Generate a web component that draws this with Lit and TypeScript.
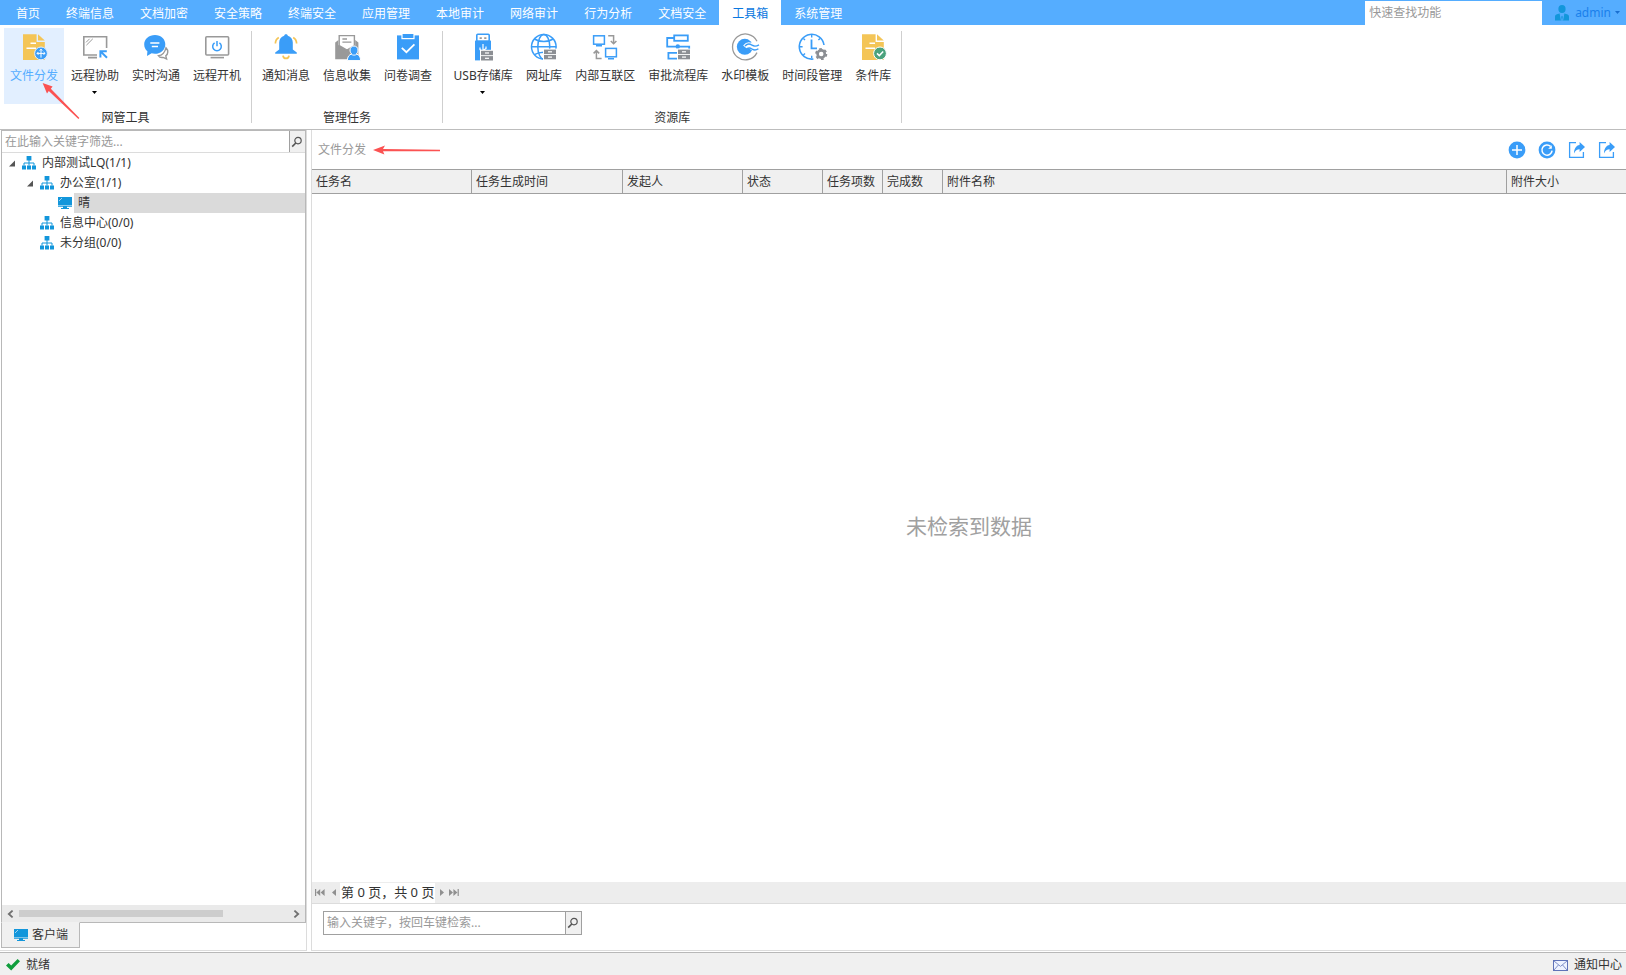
import { LitElement, html, svg, css, nothing, TemplateResult } from "lit";
import { customElement, property, state } from "lit/decorators.js";
import { classMap } from "lit/directives/class-map.js";

const BLUE = "#3a9df8";
const GRAY = "#999999";
const GOLD = "#f4c557";

const doc = svg`
  <path fill=${GOLD} d="M3 1.3H16.6V9H24.8V27H3Z"/>
  <path fill=${GOLD} d="M18 1.3L24.8 7.6H18Z"/>
  <path stroke="#fff" stroke-width="1.5" d="M10.5 10.2H16M6.5 15.3H16"/>`;

const cabinet = (x: number, y: number) => svg`
  <rect x=${x - 1} y=${y - 1} width="14" height="12" fill="#fff"/>
  <rect x=${x} y=${y} width="12" height="4.4" fill="#8c8f94"/>
  <rect x=${x} y=${y + 5.3} width="12" height="4.4" fill="#8c8f94"/>
  <rect x=${x + 4} y=${y + 1.6} width="4" height="1.2" fill="#fff"/>
  <rect x=${x + 4} y=${y + 6.9} width="4" height="1.2" fill="#fff"/>`;

const toolIcons: Record<string, TemplateResult<2>> = {
  distribute: svg`${doc}
    <circle cx="21" cy="20.4" r="6.4" fill=${BLUE} stroke="#e2efff"/>
    <path fill="none" stroke="#fff" stroke-width="1" d="M21 16.2V24.6M17 20.4H25M19.7 17.6L21 16.2L22.3 17.6M23.6 19L25 20.4L23.6 21.8M18.4 19L17 20.4L18.4 21.8"/>`,
  assist: svg`
    <path fill="none" stroke=${GRAY} stroke-width="1.6" d="M16 22H2.8V3.8H25.6V15"/>
    <path stroke=${GRAY} stroke-width="1.8" d="M7 24.6H16"/>
    <path stroke=${GRAY} stroke-width="1" d="M5 9.4L8.6 5.8M5.4 12.2L11.8 5.8"/>
    <path fill="none" stroke=${BLUE} stroke-width="2" d="M19.4 24.4V18.2H25.8M19.8 18.6L26 24.8"/>`,
  chat: svg`
    <path fill="none" stroke=${GRAY} stroke-width="1.4" d="M24 14.8C26.6 17.4 26.2 21 23.8 22.8L24.6 26L21.2 24.4C19 24.8 17.2 24 16.4 22.6C19.6 22.4 22.6 20.4 24 14.8Z"/>
    <path fill=${BLUE} d="M13 1.9C19 1.9 23.3 6 23.3 11.2C23.3 16.6 19 20.8 13 20.8C11.6 20.8 10.6 20.6 9.6 20.3L5 23L5.4 18.3C3.4 16.6 2.2 14.2 2.2 11.2C2.2 6 7 1.9 13 1.9Z"/>
    <path stroke="#fff" stroke-width="1.5" d="M8.3 10.1H17.4M9.8 13.5H16"/>`,
  power: svg`
    <rect x="2.8" y="3.8" width="22.8" height="18.2" rx="1" fill="none" stroke=${GRAY} stroke-width="1.6"/>
    <path stroke=${GRAY} stroke-width="1.6" d="M7.6 24.6H21"/>
    <path fill="none" stroke=${BLUE} stroke-width="1.5" d="M11.6 9.8A4.3 4.3 0 1 0 16.4 9.8M14 8V13.2"/>`,
  bell: svg`
    <path fill=${BLUE} d="M14 1.2C15.1 1.2 15.8 1.9 15.8 2.8C18.9 3.6 20.8 6.2 20.8 9.6V16.4L24.8 19.4V20.8H3.2V19.4L7.2 16.4V9.6C7.2 6.2 9.1 3.6 12.2 2.8C12.2 1.9 12.9 1.2 14 1.2Z"/>
    <path fill="none" stroke=${GOLD} stroke-width="1.7" d="M3.4 10.6C3.4 7.6 4.6 5.6 6.8 4.4M24.6 10.6C24.6 7.6 23.4 5.6 21.2 4.4M11 22.6C11.4 26.4 16.6 26.4 17 22.6"/>`,
  collect: svg`
    <path fill=${GRAY} d="M2.2 9.4L5.4 7V12L14 17L22.2 12V7L25.4 9.4V26.2H2.2Z"/>
    <path fill="#fff" stroke=${GRAY} stroke-width="1.4" d="M6.2 12.6V2.6H21.4V12.6L14 17Z"/>
    <path stroke=${GRAY} stroke-width="1.3" d="M9.4 6H14M9.4 9.2H18.4"/>
    <path fill=${BLUE} stroke="#fff" stroke-width="1" d="M21 13C23.3 13 25 14.7 25 17C25 18.8 24.2 20.2 23.2 21C26 21.6 27.6 23.8 27.6 27.6H14.4C14.4 23.8 16 21.6 18.8 21C17.8 20.2 17 18.8 17 17C17 14.7 18.7 13 21 13Z"/>
    <path fill="none" stroke="#fff" stroke-width=".9" d="M18.4 21.4C20 22.4 22 22.4 23.6 21.4"/>`,
  survey: svg`
    <rect x="3" y="2.4" width="22" height="24" fill=${BLUE}/>
    <rect x="8" y=".4" width="12" height="5.2" fill=${BLUE} stroke="#fff" stroke-width="1.2"/>
    <path fill="none" stroke="#fff" stroke-width="1.8" d="M7.8 14.8L12.4 19.2L20.4 11.4"/>`,
  usb: svg`
    <rect x="7.8" y="1.3" width="12.4" height="7" rx="1" fill="#fff" stroke=${BLUE} stroke-width="1.6"/>
    <path stroke=${GRAY} stroke-width="1.6" d="M10.6 5.1H12.8M15.2 5.1H17.4"/>
    <rect x="6" y="7.6" width="16" height="19.8" fill=${BLUE}/>
    <path fill="none" stroke="#fff" stroke-width="1.2" d="M14 11V20M11 14.6V16.6L14 18.4M17 13.6V15.6L14 17.4"/>
    ${cabinet(12, 17.8)}`,
  globe: svg`
    <g fill="none" stroke=${BLUE} stroke-width="1.5">
      <circle cx="13.8" cy="13.8" r="12.3"/>
      <ellipse cx="13.8" cy="13.8" rx="6" ry="12.3"/>
      <path d="M1.5 13.8H26.1M4.4 6C9.6 9.4 18 9.4 23.2 6M4.4 21.6C9.6 18.4 18 18.4 23.2 21.6"/>
    </g>
    ${cabinet(14, 16.6)}`,
  interconnect: svg`
    <g fill="none" stroke=${BLUE} stroke-width="1.5">
      <rect x="2.6" y="2.8" width="10.8" height="8.4"/>
      <rect x="14.6" y="15.4" width="10.8" height="8.4"/>
      <path d="M5 12.8H11M17 25.8H23"/>
    </g>
    <path fill="none" stroke=${GRAY} stroke-width="1.5" d="M17.2 2.8H22.6V10.4M19.8 8L22.6 10.8L25.4 8M10.6 25.6H5.4V18M2.6 20.4L5.4 17.6L8.2 20.4"/>`,
  flow: svg`
    <g fill="none" stroke=${BLUE} stroke-width="1.8">
      <rect x="10.2" y="2.4" width="13.6" height="5.4"/>
      <path d="M10 5H3.2V13.6H25.2V17M13 25.6H4.4V19.8H13"/>
    </g>
    <circle cx="13.8" cy="13.5" r="2.2" fill=${BLUE}/>
    ${cabinet(14, 16.6)}`,
  watermark: svg`
    <path fill="none" stroke=${GRAY} stroke-width="1.3" d="M26 8.2A12.9 12.9 0 1 0 26 19.6"/>
    <circle cx="13.8" cy="13.8" r="8" fill=${BLUE}/>
    <path fill="none" stroke="#fff" stroke-width="6" d="M14.4 14.4C17 11.4 19 12.2 21 13.8C23.4 15.6 25.4 15 28 13.4"/>
    <path fill="none" stroke=${BLUE} stroke-width="1.4" d="M14 13C16.8 10 19 10.8 21 12.2C23.4 13.8 25.4 13.4 28 11.8M14.6 17C17.2 14 19.2 14.8 21.2 16.2C23.4 17.6 25.2 17.4 27.4 15.8"/>`,
  period: svg`
    <path fill="none" stroke=${BLUE} stroke-width="1.6" d="M26 12A12.4 12.4 0 1 0 15.4 26"/>
    <path fill="none" stroke=${BLUE} stroke-width="1.4" d="M13.7 2V4.4M2 13.7H4.6M5.4 5.4L7 7M22 5.4L20.4 7M5.4 22L7 20.4M13.7 25V22.8"/>
    <path fill="none" stroke=${BLUE} stroke-width="1.8" d="M13.5 6.4V15.4H19"/>
    <circle cx="23.2" cy="21" r="3.6" fill="none" stroke="#8c8f94" stroke-width="2.6"/>
    <circle cx="23.2" cy="21" r="5.2" fill="none" stroke="#8c8f94" stroke-width="1.8" stroke-dasharray="2.7 2.74"/>`,
  condition: svg`${doc}
    <circle cx="21" cy="20.4" r="6.4" fill="#4aa27c" stroke="#fff"/>
    <path fill="none" stroke="#fff" stroke-width="1.5" d="M18 20.4L20.3 22.6L24.2 18.6"/>`,
};

const orgIcon = html`<svg class="ico" width="14" height="14" viewBox="0 0 14 14" aria-hidden="true">
  <path fill="#1296db" d="M4.6 0H9.4V4.6H4.6ZM0 9.4H4V13.6H0ZM5 9.4H9V13.6H5ZM10 9.4H14V13.6H10Z"/>
  <path fill="none" stroke="#1296db" stroke-width="1" d="M7 4V9.6M2 9.6V7H12V9.6"/></svg>`;
const pcIcon = html`<svg class="ico" width="14" height="14" viewBox="0 0 14 14" aria-hidden="true">
  <path fill="#1296db" d="M0 1H14V9H0ZM0 9.6H14V10.8H0ZM5 10.8H9V12H11V13H3V12H5Z"/>
  <path stroke="#9fd4f2" stroke-width="1" d="M1 5L4 2"/></svg>`;
const lens = html`<svg width="12" height="12" viewBox="0 0 12 12" aria-hidden="true">
  <circle cx="7" cy="4.6" r="3.2" fill="none" stroke="#555" stroke-width="1.2"/>
  <path stroke="#555" stroke-width="1.6" d="M4.8 7L1.2 10.6"/></svg>`;

interface Tool { icon: string; label: string; menu?: boolean }
interface Group { title: string; tools: Tool[] }
interface Node { label: string; leaf?: boolean; children?: Node[] }

const TABS = ["首页", "终端信息", "文档加密", "安全策略", "终端安全", "应用管理", "本地审计", "网络审计", "行为分析", "文档安全", "工具箱", "系统管理"];

const GROUPS: Group[] = [
  { title: "网管工具", tools: [
    { icon: "distribute", label: "文件分发" },
    { icon: "assist", label: "远程协助", menu: true },
    { icon: "chat", label: "实时沟通" },
    { icon: "power", label: "远程开机" },
  ] },
  { title: "管理任务", tools: [
    { icon: "bell", label: "通知消息" },
    { icon: "collect", label: "信息收集" },
    { icon: "survey", label: "问卷调查" },
  ] },
  { title: "资源库", tools: [
    { icon: "usb", label: "USB存储库", menu: true },
    { icon: "globe", label: "网址库" },
    { icon: "interconnect", label: "内部互联区" },
    { icon: "flow", label: "审批流程库" },
    { icon: "watermark", label: "水印模板" },
    { icon: "period", label: "时间段管理" },
    { icon: "condition", label: "条件库" },
  ] },
];

const TREE: Node[] = [
  { label: "内部测试LQ(1/1)", children: [
    { label: "办公室(1/1)", children: [{ label: "晴", leaf: true }] },
    { label: "信息中心(0/0)" },
    { label: "未分组(0/0)" },
  ] },
];

const base = css`
  * { box-sizing: border-box; }
  button, input { font: inherit; color: inherit; margin: 0; padding: 0; border: 0; background: none; border-radius: 0; outline: none; }
  button { cursor: pointer; }
  svg { display: block; flex: none; }
  input::placeholder { color: #999; opacity: 1; }
`;

@customElement("top-tabs")
export class TopTabs extends LitElement {
  @state() private active = "工具箱";
  static styles = [base, css`
    :host { display: flex; height: 25px; background: #55adff; padding-left: 3px; }
    .tabs { display: flex; }
    .tab { padding: 3px 13px 0; color: #fff; white-space: nowrap; }
    .tab.on { background: #fff; color: #0a78e0; }
    .find { margin: 1px 13px 0 auto; width: 177px; background: #fff; padding: 0 4px 1px; }
    .user { display: flex; align-items: center; gap: 6px; padding-right: 6px; color: #1a80ec; }
    .user svg:last-child { margin-left: -2px; }
  `];
  render() {
    return html`
      <nav class="tabs">${TABS.map(t => html`
        <button class=${classMap({ tab: true, on: t === this.active })} @click=${() => (this.active = t)}>${t}</button>`)}
      </nav>
      <input class="find" type="text" aria-label="快速查找功能" placeholder="快速查找功能">
      <button class="user">
        <svg width="14" height="16" viewBox="0 0 14 16" aria-hidden="true">
          <ellipse cx="7" cy="4" rx="3.6" ry="4" fill="#1296db"/>
          <path fill="#1296db" d="M0 15.6V11.4C0 9.6 2 8.8 4.6 8.4L7 12L9.4 8.4C12 8.8 14 9.6 14 11.4V15.6Z"/>
          <path stroke="#55adff" d="M5.2 9L6.4 15.6M8.8 9L7.6 15.6"/>
        </svg>
        <span>admin</span>
        <svg width="5" height="3" viewBox="0 0 5 3" aria-hidden="true"><path fill="#1a6fd0" d="M0 0H5L2.5 3Z"/></svg>
      </button>`;
  }
}

@customElement("tool-ribbon")
export class ToolRibbon extends LitElement {
  @state() private active = "文件分发";
  static styles = [base, css`
    :host { display: flex; padding: 3px 0 2px; background: #fff; border-bottom: 1px solid #bdbdbd; }
    .group { position: relative; display: flex; flex-direction: column; padding: 0 4px; }
    .group::after { content: ""; position: absolute; right: -1px; top: 3px; bottom: 4px; width: 1px; background: #cfcfcf; }
    .group + .group { margin-left: 1px; }
    .tools { display: flex; gap: 1px; }
    .tool { display: flex; flex-direction: column; align-items: center; height: 76px; padding: 5px 6px 0; white-space: nowrap; line-height: 18px; }
    .tool.wide { min-width: 72px; }
    .tool svg { margin-bottom: 6px; overflow: visible; }
    .tool.on { background: #e2efff; color: #55adff; }
    .tool .caret { margin: 6px 0 0; }
    .title { text-align: center; line-height: 18px; margin-top: 5px; }
  `];
  render() {
    return GROUPS.map(g => html`
      <section class="group">
        <div class="tools">${g.tools.map(t => html`
          <button class=${classMap({ tool: true, wide: t.label.length > 4, on: t.label === this.active })} @click=${() => (this.active = t.label)}>
            <svg width="28" height="28" viewBox="0 0 28 28" aria-hidden="true">${toolIcons[t.icon]}</svg>
            <span>${t.label}</span>
            ${t.menu ? html`<svg class="caret" width="6" height="3" viewBox="0 0 6 3" aria-hidden="true"><path d="M0 0H5L2.5 3Z"/></svg>` : nothing}
          </button>`)}
        </div>
        <div class="title">${g.title}</div>
      </section>`);
  }
}

@customElement("search-field")
export class SearchField extends LitElement {
  @property() hint = "";
  static styles = [base, css`
    :host { display: flex; background: #fff; }
    input { flex: 1; min-width: 0; padding: 0 0 0 3px; }
    button { width: 16px; display: flex; align-items: center; justify-content: center; padding-right: 1px; background: #f0f0f0; border-left: 1px solid #a0a0a0; }
  `];
  render() {
    return html`<input type="text" aria-label=${this.hint} placeholder=${this.hint}><button aria-label="检索">${lens}</button>`;
  }
}

@customElement("client-panel")
export class ClientPanel extends LitElement {
  @state() private selected = "晴";
  static styles = [base, css`
    :host { display: flex; flex-direction: column; padding: 0 0 2px 1px; border: solid #dcdcdc; border-width: 0 1px 1px 0; background: #fff; }
    .box { flex: 1; display: flex; flex-direction: column; border: 1px solid #b8b8b8; }
    search-field { height: 22px; border-bottom: 1px solid #dcdcdc; }
    .tree { flex: 1; }
    ul { list-style: none; margin: 0; padding: 0; }
    ul ul { padding-left: 18px; }
    .row { display: flex; align-items: center; width: 100%; height: 20px; text-align: left; }
    .twist { width: 20px; padding-left: 7px; }
    .name { flex: 1; line-height: 20px; margin-left: 2px; padding-left: 4px; }
    .name.on { background: #dadada; }
    .scroll { display: flex; align-items: center; height: 17px; background: #eaeaea; }
    .scroll button { width: 17px; height: 17px; display: grid; place-items: center; }
    .track { flex: 1; }
    .thumb { width: 76%; height: 7px; background: #cdcdcd; }
    .dock { align-self: flex-start; display: flex; align-items: center; gap: 4px; height: 26px; margin-top: -1px; padding: 0 11px 1px 12px; background: #f0f0f0; border: 1px solid #b8b8b8; border-top-color: #f0f0f0; }
  `];
  private nodes(list: Node[]): TemplateResult {
    return html`<ul>${list.map(n => html`<li>
      <button class="row" @click=${() => (this.selected = n.label)}>
        <span class="twist">${n.children ? html`<svg width="7" height="7" viewBox="0 0 7 7" aria-hidden="true"><path fill="#555" d="M6 .5V6.5H0Z"/></svg>` : nothing}</span>
        ${n.leaf ? pcIcon : orgIcon}
        <span class=${classMap({ name: true, on: n.label === this.selected })}>${n.label}</span>
      </button>
      ${n.children ? this.nodes(n.children) : nothing}
    </li>`)}</ul>`;
  }
  render() {
    return html`
      <div class="box">
        <search-field hint="在此输入关键字筛选..."></search-field>
        <div class="tree">${this.nodes(TREE)}</div>
        <div class="scroll">
          <button aria-label="向左"><svg width="7" height="8" viewBox="0 0 7 8"><path fill="none" stroke="#707070" stroke-width="1.8" d="M5.6 .6L1.8 4L5.6 7.4"/></svg></button>
          <div class="track"><div class="thumb"></div></div>
          <button aria-label="向右"><svg width="7" height="8" viewBox="0 0 7 8"><path fill="none" stroke="#707070" stroke-width="1.8" d="M1.4 .6L5.2 4L1.4 7.4"/></svg></button>
        </div>
      </div>
      <button class="dock">${pcIcon}<span>客户端</span></button>`;
  }
}

@customElement("task-panel")
export class TaskPanel extends LitElement {
  static styles = [base, css`
    :host { display: flex; flex-direction: column; border: solid #dcdcdc; border-width: 0 0 1px 1px; background: #fff; }
    .head { position: relative; display: flex; align-items: center; height: 39px; padding: 0 10px 0 6px; }
    h1 { margin: 0 auto 0 0; font-size: 12px; font-weight: 400; color: #999; }
    .acts { display: flex; gap: 12px; }
    .mark { position: absolute; left: 60px; top: 13px; pointer-events: none; }
    table { width: 100%; table-layout: fixed; border-collapse: separate; border-spacing: 0; background: #f0f0f0; }
    th { height: 25px; padding: 0 0 0 4px; font-weight: 400; text-align: left; line-height: 18px; border: solid #a0a0a0; border-width: 1px 1px 1px 0; white-space: nowrap; overflow: hidden; }
    th:last-child { width: 119px; border-right: 0; }
    .w160 { width: 160px; } .w150 { width: 151px; } .w120 { width: 120px; } .w80 { width: 80px; } .w60 { width: 60px; }
    .empty { flex: 1; display: grid; place-items: center; padding-bottom: 24px; font-size: 21px; color: #a0a0a0; }
    .pager { display: flex; align-items: center; height: 22px; padding-left: 3px; background: #ededed; border-bottom: 1px solid #dcdcdc; }
    .pager button { display: grid; place-items: center; height: 20px; }
    .pager .prev { width: 15px; padding-left: 3px; }
    .next { width: 14px; }
    .page { padding: 0 1px; height: 20px; line-height: 18px; background: #fff; font-size: 13px; white-space: nowrap; }
    .foot { padding: 7px 11px 15px; }
    .foot search-field { width: 259px; height: 24px; border: 1px solid #a0a0a0; }
  `];
  render() {
    const share = html`<svg width="18" height="18" viewBox="0 0 18 18" aria-hidden="true">
      <path fill="none" stroke=${BLUE} stroke-width="1.3" d="M8 1.6H1.6V16.4H15.4V11"/>
      <path fill=${BLUE} d="M11.6 1L17 6L11.6 11V8.2C9 8.2 7.4 9.4 6 12.4C6 8 8 4.4 11.6 4Z"/></svg>`;
    return html`
      <div class="head">
        <h1>文件分发</h1>
        <svg class="mark" width="70" height="14" viewBox="0 0 70 14" aria-hidden="true">
          <path fill="#fb5252" d="M1 7L13 2.6L11 6L68 6.8V8.2L11 8.2L12.4 11.6Z"/></svg>
        <div class="acts">
          <button aria-label="新建"><svg width="18" height="18" viewBox="0 0 18 18" aria-hidden="true"><circle cx="9" cy="9" r="8.4" fill=${BLUE}/><path stroke="#fff" stroke-width="1.5" d="M9 4V14M4 9H14"/></svg></button>
          <button aria-label="刷新"><svg width="18" height="18" viewBox="0 0 18 18" aria-hidden="true"><circle cx="9" cy="9" r="8.4" fill=${BLUE}/><path fill="none" stroke="#fff" stroke-width="1.5" d="M12.6 5.4A5.1 5.1 0 1 0 14.1 9.6"/><path fill="#fff" d="M13.8 4.2V7.8H10.2Z"/></svg></button>
          <button aria-label="导出">${share}</button>
          <button aria-label="分享">${share}</button>
        </div>
      </div>
      <table>
        <thead><tr>
          <th class="w160">任务名</th><th class="w150">任务生成时间</th><th class="w120">发起人</th><th class="w80">状态</th>
          <th class="w60">任务项数</th><th class="w60">完成数</th><th>附件名称</th><th>附件大小</th>
        </tr></thead>
      </table>
      <div class="empty">未检索到数据</div>
      <div class="pager">
        <button aria-label="第一页"><svg width="10" height="7" viewBox="0 0 10 7"><path fill="#909090" d="M0 0H1.2V7H0ZM5.2 0V7L1.4 3.5ZM9.6 0V7L5.6 3.5Z"/></svg></button>
        <button class="prev" aria-label="上一页"><svg width="4" height="7" viewBox="0 0 4 7"><path fill="#909090" d="M4 0V7L0 3.5Z"/></svg></button>
        <span class="page">第 0 页，共 0 页</span>
        <button class="next" aria-label="下一页"><svg width="4" height="7" viewBox="0 0 4 7"><path fill="#909090" d="M0 0V7L4 3.5Z"/></svg></button>
        <button aria-label="最后一页"><svg width="10" height="7" viewBox="0 0 10 7"><path fill="#909090" d="M0 0V7L4 3.5ZM4.4 0V7L8.4 3.5ZM8.6 0H9.8V7H8.6Z"/></svg></button>
      </div>
      <div class="foot"><search-field hint="输入关键字，按回车键检索..."></search-field></div>`;
  }
}

@customElement("app-root")
export class AppRoot extends LitElement {
  static styles = [base, css`
    :host { position: relative; display: flex; flex-direction: column; height: 100vh; overflow: hidden; background: #fff; color: #333;
      font: 12px/18px "Noto Sans", "Noto Sans CJK SC", sans-serif; }
    .body { flex: 1; display: flex; gap: 4px; min-height: 0; padding-bottom: 1px; }
    client-panel { width: 307px; flex: none; }
    task-panel { flex: 1; min-width: 0; }
    .status { display: flex; align-items: center; height: 23px; padding: 2px 4px 0 6px; background: #f0f0f0; border-top: 1px solid #b8b8b8; }
    .status span { margin-left: 6px; }
    .msg { margin-left: auto; display: flex; align-items: center; }
    .pointer { position: absolute; left: 42px; top: 82px; pointer-events: none; }
  `];
  render() {
    return html`
      <top-tabs></top-tabs>
      <tool-ribbon></tool-ribbon>
      <div class="body"><client-panel></client-panel><task-panel></task-panel></div>
      <footer class="status">
        <svg width="14" height="12" viewBox="0 0 14 12" aria-hidden="true"><path fill="#0f9d3c" d="M0 6.4L2.6 4L5.2 6.6L11.6 0L14 2.2L5.2 11.6Z"/></svg>
        <span>就绪</span>
        <button class="msg">
          <svg width="15" height="11" viewBox="0 0 15 11" aria-hidden="true"><rect x=".5" y=".5" width="14" height="10" fill="#eef3ff" stroke="#5f73b8"/><path fill="none" stroke="#7f90c8" d="M1 1L7.5 6.4L14 1M1 10L5.4 5M14 10L9.6 5"/></svg>
          <span>通知中心</span>
        </button>
      </footer>
      <svg class="pointer" width="38" height="38" viewBox="0 0 38 38" aria-hidden="true">
        <path fill="#fb5252" d="M.6 1L10.6 4.6L8.8 6.8L37.4 36L36.4 37L6.8 9L5 11.4Z"/></svg>`;
  }
}
